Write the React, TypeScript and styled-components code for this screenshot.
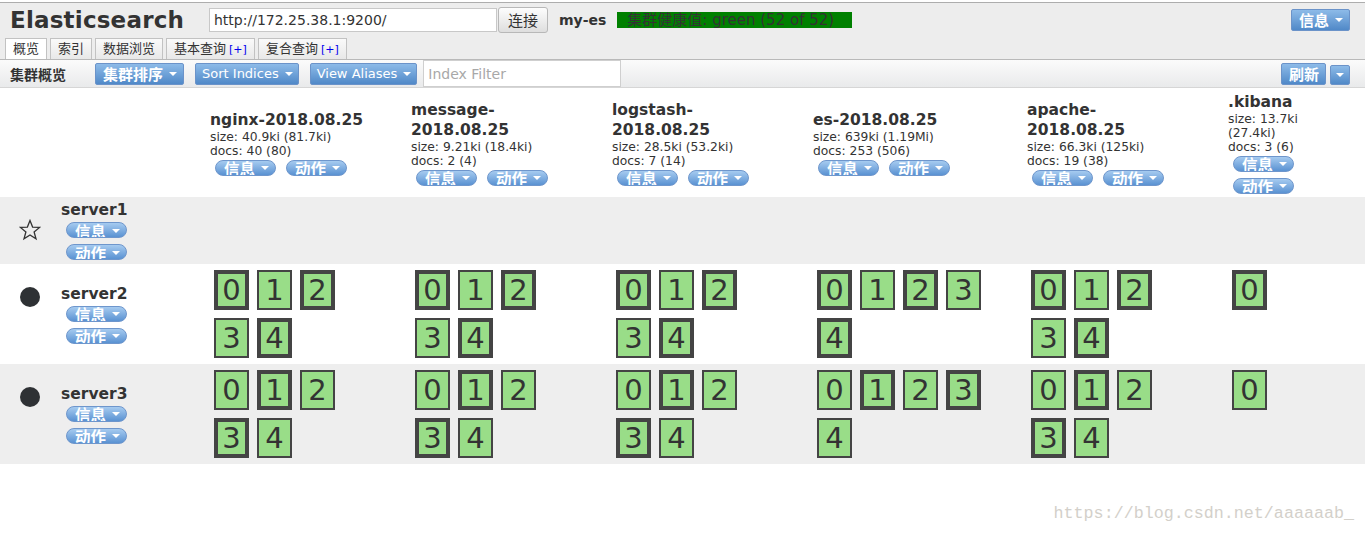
import styled, { createGlobalStyle } from "styled-components";

const GlobalStyle = createGlobalStyle`
  body {
    margin: 0;
    font-family: "DejaVu Sans", "Noto Sans CJK SC", sans-serif;
    color: #333;
    background: #fff;
  }
`;

interface IndexInfo {
  name: string;
  size: string;
  docs: string;
  shards: number;
}

interface ServerInfo {
  name: string;
  master: boolean;
  parity?: number; // which shards are primary on this node
}

const indices: IndexInfo[] = [
  { name: "nginx-2018.08.25", size: "40.9ki (81.7ki)", docs: "40 (80)", shards: 5 },
  { name: "message-2018.08.25", size: "9.21ki (18.4ki)", docs: "2 (4)", shards: 5 },
  { name: "logstash-2018.08.25", size: "28.5ki (53.2ki)", docs: "7 (14)", shards: 5 },
  { name: "es-2018.08.25", size: "639ki (1.19Mi)", docs: "253 (506)", shards: 5 },
  { name: "apache-2018.08.25", size: "66.3ki (125ki)", docs: "19 (38)", shards: 5 },
  { name: ".kibana", size: "13.7ki (27.4ki)", docs: "3 (6)", shards: 1 },
];

const servers: ServerInfo[] = [
  { name: "server1", master: true },
  { name: "server2", master: false, parity: 0 },
  { name: "server3", master: false, parity: 1 },
];

const App = () => {
  return (
    <>
      <GlobalStyle />
      <Header>
        <TopBar>
          <Title>Elasticsearch</Title>
          <UrlInput defaultValue="http://172.25.38.1:9200/" />
          <ConnectButton>连接</ConnectButton>
          <ClusterName>my-es</ClusterName>
          <Health>集群健康值: green (52 of 52)</Health>
          <Spacer />
          <BlueButton $cjk>
            信息
            <Caret />
          </BlueButton>
        </TopBar>
        <Tabs>
          <Tab $active>概览</Tab>
          <Tab>索引</Tab>
          <Tab>数据浏览</Tab>
          <Tab>
            基本查询<Plus>[+]</Plus>
          </Tab>
          <Tab>
            复合查询<Plus>[+]</Plus>
          </Tab>
        </Tabs>
      </Header>

      <Toolbar>
        <ToolbarLabel>集群概览</ToolbarLabel>
        <BlueButton $cjk>
          集群排序
          <Caret />
        </BlueButton>
        <BlueButton>
          Sort Indices
          <Caret />
        </BlueButton>
        <BlueButton>
          View Aliases
          <Caret />
        </BlueButton>
        <FilterInput placeholder="Index Filter" />
        <Spacer />
        <BlueButton $cjk $tight>
          刷新
        </BlueButton>
        <DropButton>
          <Caret $bare />
        </DropButton>
      </Toolbar>

      <Row $height={109}>
        <div />
        {indices.map((idx) => (
          <IndexHead key={idx.name}>
            <IndexName>{idx.name}</IndexName>
            <Stat>size: {idx.size}</Stat>
            <Stat>docs: {idx.docs}</Stat>
            <PillGroup $stacked={false}>
              <Pill>
                信息
                <Caret />
              </Pill>
              <Pill>
                动作
                <Caret />
              </Pill>
            </PillGroup>
          </IndexHead>
        ))}
      </Row>

      {servers.map((srv, i) => (
        <Row key={srv.name} $shade={i % 2 === 0} $height={srv.master ? 67 : undefined}>
          <ServerCell>
            <NodeIcon $master={srv.master}>
              {srv.master ? (
                <svg width="22" height="22" viewBox="0 0 22 22">
                  <polygon
                    points="11,1.5 13.6,8.1 20.6,8.4 15.1,12.9 17,19.9 11,16 5,19.9 6.9,12.9 1.4,8.4 8.4,8.1"
                    fill="none"
                    stroke="#333"
                    strokeWidth="1.3"
                  />
                </svg>
              ) : (
                <Dot />
              )}
            </NodeIcon>
            <ServerInfoBox>
              <ServerName>{srv.name}</ServerName>
              <PillGroup $stacked>
                <Pill>
                  信息
                  <Caret />
                </Pill>
                <Pill>
                  动作
                  <Caret />
                </Pill>
              </PillGroup>
            </ServerInfoBox>
          </ServerCell>
          {indices.map((idx) => (
            <ShardCell key={idx.name}>
              {!srv.master &&
                Array.from({ length: idx.shards }).map((_, n) => (
                  <Shard key={n} $primary={n % 2 === srv.parity}>
                    {n}
                  </Shard>
                ))}
            </ShardCell>
          ))}
        </Row>
      ))}

      <Watermark>https://blog.csdn.net/aaaaaab_</Watermark>
    </>
  );
};

export default App;

const Header = styled.div`
  margin-top: 2px;
  border-top: 1px solid #adadad;
  background: #ededed;
`;

const TopBar = styled.div`
  display: flex;
  align-items: center;
  height: 33px;
  padding: 0 15px 0 10px;
`;

const Title = styled.div`
  width: 199px;
  font-size: 23px;
  font-weight: bold;
  letter-spacing: 0.2px;
  color: #333;
`;

const UrlInput = styled.input`
  box-sizing: border-box;
  width: 288px;
  height: 24px;
  border: 1px solid #c8c8c8;
  padding: 0 4px;
  font-family: "DejaVu Sans", sans-serif;
  font-size: 14px;
  color: #333;
  outline: none;
`;

const ConnectButton = styled.button`
  box-sizing: border-box;
  width: 50px;
  height: 26px;
  margin-left: 1px;
  border: 1px solid #b8b8b8;
  border-radius: 3px;
  background: linear-gradient(#fdfdfd, #dedede);
  font-family: "Noto Sans CJK SC", sans-serif;
  font-size: 15px;
  color: #333;
  padding: 0;
`;

const ClusterName = styled.div`
  margin-left: 11px;
  font-size: 14px;
  font-weight: bold;
`;

const Health = styled.div`
  box-sizing: border-box;
  margin-left: 11px;
  width: 235px;
  height: 16px;
  padding-left: 10px;
  background: #008000;
  color: #333;
  font-size: 15px;
  line-height: 16px;
  white-space: nowrap;
  overflow: hidden;
`;

const Spacer = styled.div`
  flex: 1;
`;

const Tabs = styled.div`
  display: flex;
  gap: 3px;
  margin-top: 2px;
  padding-left: 5px;
`;

const Tab = styled.div<{ $active?: boolean }>`
  box-sizing: border-box;
  height: 21px;
  padding: 0 7px;
  border: 1px solid #c2c2c2;
  border-bottom: none;
  background: ${({ $active }) => ($active ? "#fff" : "linear-gradient(#fafafa, #e8e8e8)")};
  font-size: 13px;
  line-height: 20px;
  color: #333;
  white-space: nowrap;
`;

const Plus = styled.span`
  margin-left: 3px;
  font-size: 11px;
  color: #0000ee;
`;

const Toolbar = styled.div`
  display: flex;
  align-items: center;
  height: 27px;
  padding: 0 15px 0 10px;
  border-top: 1px solid #b9b9b9;
  border-bottom: 1px solid #d6d6d6;
  background: linear-gradient(#fbfbfb, #e9eaeb);
`;

const ToolbarLabel = styled.div`
  width: 85px;
  font-size: 14px;
  font-weight: bold;
`;

const BlueButton = styled.button<{ $cjk?: boolean; $tight?: boolean }>`
  box-sizing: border-box;
  display: inline-flex;
  align-items: center;
  height: 22px;
  margin-right: ${({ $tight }) => ($tight ? "4px" : "11px")};
  padding: ${({ $cjk }) => ($cjk ? "0 6px 0 7px" : "0 5px 0 6px")};
  border: 1px solid #6b93c9;
  border-radius: 2px;
  background: linear-gradient(#8dbbe8, #5089c8);
  color: #fff;
  font-family: "DejaVu Sans", "Noto Sans CJK SC", sans-serif;
  font-size: ${({ $cjk }) => ($cjk ? "15px" : "13px")};
  font-weight: ${({ $cjk }) => ($cjk ? "bold" : "normal")};
  white-space: nowrap;
  &:last-child {
    margin-right: 0;
  }
`;

const DropButton = styled.button`
  box-sizing: border-box;
  width: 20px;
  height: 20px;
  margin-top: 2px;
  padding: 0;
  border: 1px solid #6b93c9;
  border-radius: 2px;
  background: linear-gradient(#8dbbe8, #5089c8);
  display: flex;
  align-items: center;
  justify-content: center;
`;

const Caret = styled.span<{ $bare?: boolean }>`
  display: inline-block;
  flex-shrink: 0;
  width: 0;
  height: 0;
  margin-left: ${({ $bare }) => ($bare ? "0" : "6px")};
  border-left: 4px solid transparent;
  border-right: 4px solid transparent;
  border-top: 4px solid #fff;
`;

const FilterInput = styled.input`
  box-sizing: border-box;
  width: 198px;
  height: 27px;
  margin-left: -5px;
  padding: 0 4px;
  border: 1px solid #cfcfcf;
  background: #fff;
  font-family: "DejaVu Sans", sans-serif;
  font-size: 14px;
  outline: none;
  &::placeholder {
    color: #a8a8a8;
  }
`;

const Row = styled.div<{ $shade?: boolean; $height?: number }>`
  display: grid;
  grid-template-columns: 210px 201px 201px 201px 214px 201px 1fr;
  background: ${({ $shade }) => ($shade ? "#eeeeee" : "#fff")};
  height: ${({ $height }) => ($height ? `${$height}px` : "auto")};
`;

const IndexHead = styled.div`
  align-self: center;
  padding-right: 40px;
`;

const IndexName = styled.div`
  font-size: 15.5px;
  font-weight: bold;
  line-height: 20px;
  color: #333;
`;

const Stat = styled.div`
  font-size: 12.3px;
  line-height: 14px;
  color: #333;
`;

const PillGroup = styled.div<{ $stacked: boolean }>`
  display: flex;
  flex-direction: ${({ $stacked }) => ($stacked ? "column" : "row")};
  flex-wrap: wrap;
  column-gap: 10px;
  row-gap: 6px;
  margin-top: ${({ $stacked }) => ($stacked ? "3px" : "2px")};
  padding-left: 5px;
`;

const Pill = styled.div`
  box-sizing: border-box;
  display: flex;
  align-items: center;
  width: 61px;
  height: 16px;
  padding: 1px 0 0 8px;
  overflow: hidden;
  border: 1px solid #6e96cc;
  border-radius: 8px;
  background: linear-gradient(#a6cbf0, #5a92d2);
  color: #fff;
  font-family: "Noto Sans CJK SC", sans-serif;
  font-size: 15.5px;
  font-weight: bold;
  line-height: 14px;
  white-space: nowrap;
`;

const ServerCell = styled.div`
  display: flex;
  align-items: flex-start;
  align-self: center;
  padding-left: 19px;
`;

const NodeIcon = styled.div<{ $master: boolean }>`
  display: flex;
  justify-content: center;
  width: 22px;
  height: 22px;
  margin-top: ${({ $master }) => ($master ? "18px" : "2px")};
  margin-right: 20px;
`;

const Dot = styled.div`
  width: 20px;
  height: 20px;
  border-radius: 50%;
  background: #2e3134;
`;

const ServerInfoBox = styled.div`
  display: flex;
  flex-direction: column;
`;

const ServerName = styled.div`
  font-size: 15.5px;
  font-weight: bold;
  line-height: 18px;
`;

const ShardCell = styled.div`
  display: flex;
  flex-wrap: wrap;
  align-content: flex-start;
  padding: 2px 40px 2px 0;
`;

const Shard = styled.div<{ $primary: boolean }>`
  box-sizing: border-box;
  display: flex;
  align-items: center;
  justify-content: center;
  width: 35px;
  height: 40px;
  margin: 4px;
  border: ${({ $primary }) => ($primary ? "4px" : "2px")} solid #444;
  background: #99dd88;
  color: #333;
  font-size: 29px;
  line-height: 1;
`;

const Watermark = styled.div`
  margin-top: 40px;
  padding-right: 11px;
  text-align: right;
  font-family: "Liberation Mono", monospace;
  font-size: 16.7px;
  color: #d3d0ca;
`;
